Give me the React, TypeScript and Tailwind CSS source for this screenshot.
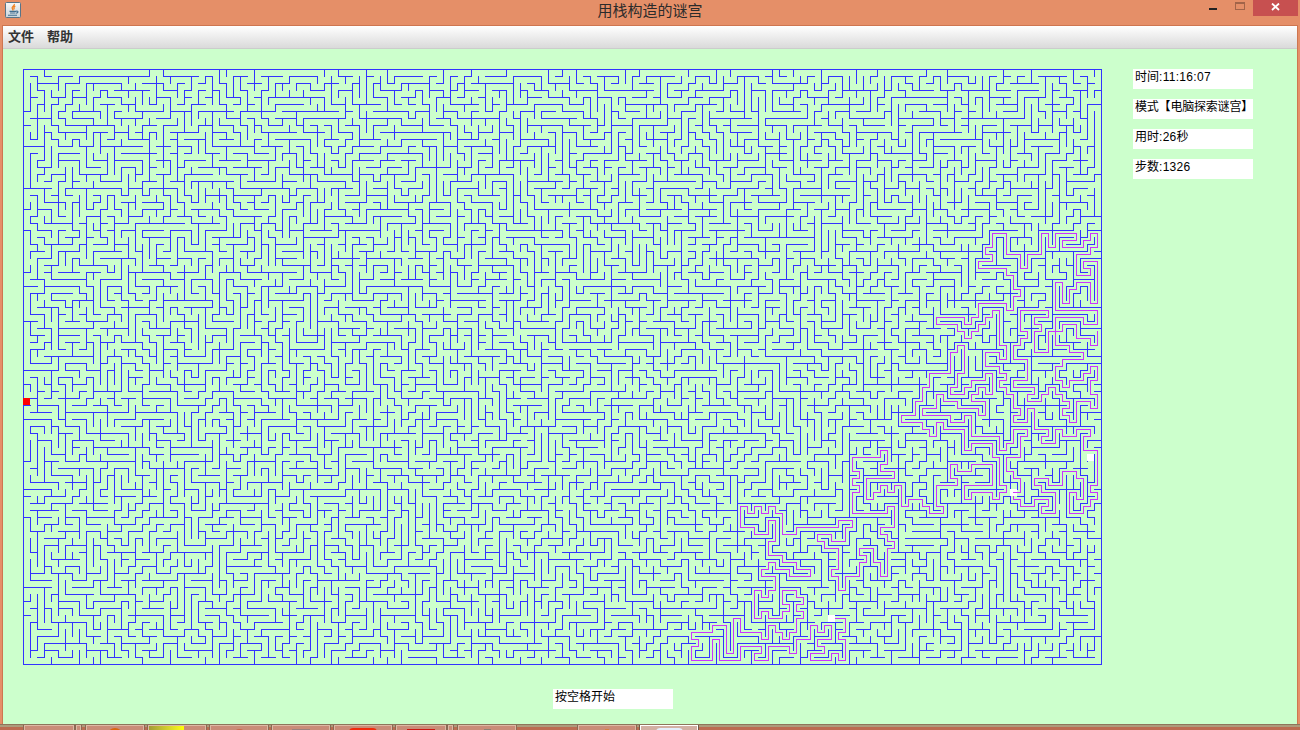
import React from "react";

const COLS = 154;
const ROWS = 85;
const CELL = 7;

// Corner cells (column,row) of the explored route, in walking order.
const ROUTE = `
115,78 117,78 117,80 116,80 116,81 117,81 117,84 116,84 116,83 115,83 115,84 112,84 112,83 114,83 114,82 113,82 113,81 115,81
115,79 114,79 114,80 113,80 113,79 112,79 112,81 110,81 110,83 109,83 109,82 106,82 106,84 104,84 104,83 105,83 105,82
102,82 102,84 99,84 99,81 98,81 98,84 95,84 95,82 96,82 96,81 95,81 95,80 98,80 98,79 100,79 100,83 101,83 101,78
102,78 102,80 105,80 105,81 106,81 106,79 107,79 107,80 108,80 108,81 109,81 109,80 110,80 110,78 111,78 111,77 110,77
110,76 111,76 111,75 110,75 110,74 108,74 108,76 109,76 109,77 108,77 108,78 106,78 106,77 105,77 105,78 104,78 104,74
105,74 105,75 106,75 106,74 107,74 107,72 105,72 105,71 106,71 106,70 107,70 107,71 109,71 109,72 112,72 112,71 110,71
110,70 108,70 108,69 106,69 106,67 107,67 107,64 106,64 106,66 104,66 104,65 102,65 102,62 103,62 103,63 104,63 104,62
105,62 105,63 106,63 106,62 107,62 107,63 108,63 108,66 110,66 110,65 116,65 116,64 118,64 118,65 117,65 117,67 115,67
115,66 113,66 113,67 114,67 114,68 116,68 116,71 115,71 115,72 116,72 116,74 117,74 117,72 119,72 119,70 120,70 120,69
119,69 119,68 121,68 121,70 122,70 122,72 123,72 123,68 124,68 124,67 123,67 123,66 122,66 122,65 124,65 124,62 123,62
123,63 118,63 118,60 119,60 119,59 118,59 118,58 119,58 119,57 118,57 118,55 122,55 122,54 123,54 123,56 122,56 122,57
124,57 124,58 120,58 120,61 121,61 121,60 122,60 122,59 123,59 123,60 124,60 124,59 125,59 125,62 126,62 126,61 128,61
128,62 129,62 129,63 131,63 131,62 130,62 130,59 133,59 133,58 132,58 132,56 133,56 133,57 135,57 135,56 138,56 138,59
134,59 134,61 135,61 135,60 138,60 138,61 139,61 139,60 140,60 140,59 139,59 139,55 138,55 138,53 135,53 135,54 134,54
134,51 131,51 131,50 130,50 130,52 129,52 129,51 128,51 128,50 125,50 125,49 127,49 127,47 128,47 128,45 129,45 129,43
132,43 132,40 133,40 133,39 134,39 134,43 133,43 133,45 132,45 132,46 134,46 134,45 135,45 135,44 137,44 137,43 138,43
138,46 137,46 137,45 136,45 136,46 135,46 135,47 137,47 137,49 136,49 136,48 133,48 133,47 131,47 131,46 130,46 130,48
128,48 128,49 132,49 132,50 134,50 134,49 135,49 135,52 139,52 139,54 140,54 140,53 141,53 141,51 143,51 143,52 142,52
142,55 140,55 140,57 141,57 141,58 142,58 142,60 141,60 141,61 142,61 142,62 144,62 144,61 146,61 146,62 145,62 145,63
147,63 147,60 145,60 145,59 144,59 144,58 146,58 146,59 148,59 148,57 150,57 150,58 151,58 151,61 150,61 150,60 149,60
149,63 151,63 151,62 152,62 152,61 153,61 153,60 152,60 152,59 153,59 153,54 151,54 151,52 152,52 152,51 150,51 150,52
148,52 148,51 147,51 147,53 145,53 145,52 146,52 146,51 144,51 144,48 143,48 143,50 141,50 141,49 142,49 142,48 141,48
141,46 140,46 140,45 139,45 139,44 140,44 140,43 139,43 139,42 137,42 137,40 139,40 139,41 140,41 140,39 139,39 139,34
138,34 138,35 137,35 137,36 136,36 136,37 135,37 135,38 134,38 134,37 133,37 133,36 130,36 130,35 134,35 134,36 135,36
135,35 136,35 136,33 140,33 140,34 141,34 141,32 142,32 142,31 141,31 141,29 140,29 140,28 136,28 136,27 138,27 138,26
137,26 137,25 138,25 138,23 140,23 140,26 142,26 142,28 143,28 143,26 145,26 145,23 146,23 146,25 147,25 147,23 150,23
150,24 148,24 148,25 151,25 151,24 152,24 152,23 153,23 153,25 152,25 152,26 150,26 150,29 152,29 152,28 151,28 151,27
153,27 153,33 152,33 152,30 150,30 150,31 149,31 149,33 148,33 148,30 147,30 147,34 153,34 153,36 151,36 151,35 147,35
147,37 146,37 146,40 144,40 144,37 145,37 145,36 144,36 144,35 146,35 146,34 142,34 142,37 143,37 143,38 142,38 142,39
141,39 141,41 143,41 143,44 141,44 141,45 144,45 144,46 143,46 143,47 145,47 145,46 146,46 146,45 147,45 147,46 148,46
148,47 149,47 149,48 148,48 148,49 149,49 149,50 150,50 150,47 152,47 152,48 153,48 153,46 152,46 152,44 153,44 153,42
152,42 152,43 151,43 151,44 149,44 149,45 148,45 148,44 147,44 147,42 148,42 148,41 151,41 151,40 149,40 149,39 147,39
147,37 148,37 148,36 150,36 150,38 152,38 152,39 153,39 153,37`;

const corners: number[][] = ROUTE.trim()
  .split(/\s+/)
  .map((pair) => pair.split(",").map(Number));

function buildWalls(): string {
  const seen = new Uint8Array(COLS * ROWS);
  const open = new Set<number>();
  const active: number[] = [];
  const link = (a: number, b: number) => {
    open.add(Math.min(a, b) * 2 + (Math.abs(a - b) === 1 ? 0 : 1));
  };
  const visit = (i: number) => {
    seen[i] = 1;
    active.push(i);
  };

  visit(corners[0][1] * COLS + corners[0][0]);
  for (let i = 1; i < corners.length; i++) {
    let [c, r] = corners[i - 1];
    const [tc, tr] = corners[i];
    while (c !== tc || r !== tr) {
      const nc = c + Math.sign(tc - c);
      const nr = nc === c ? r + Math.sign(tr - r) : r;
      const next = nr * COLS + nc;
      link(r * COLS + c, next);
      if (!seen[next]) visit(next);
      c = nc;
      r = nr;
    }
  }

  let seed = 20111607;
  const random = () => {
    seed = (seed + 0x6d2b79f5) | 0;
    let t = Math.imul(seed ^ (seed >>> 15), 1 | seed);
    t = (t + Math.imul(t ^ (t >>> 7), 61 | t)) ^ t;
    return ((t ^ (t >>> 14)) >>> 0) / 4294967296;
  };

  // Follow the newest cell most of the time and branch off elsewhere now and then.
  while (active.length) {
    const at = random() < 0.82 ? active.length - 1 : Math.floor(random() * active.length);
    const cell = active[at];
    const c = cell % COLS;
    const free: number[] = [];
    if (c > 0 && !seen[cell - 1]) free.push(cell - 1);
    if (c < COLS - 1 && !seen[cell + 1]) free.push(cell + 1);
    if (cell >= COLS && !seen[cell - COLS]) free.push(cell - COLS);
    if (cell < COLS * (ROWS - 1) && !seen[cell + COLS]) free.push(cell + COLS);
    if (!free.length) {
      active.splice(at, 1);
      continue;
    }
    const next = free[Math.floor(random() * free.length)];
    link(cell, next);
    visit(next);
  }

  let d = "";
  for (let r = 0; r < ROWS; r++)
    for (let c = 0; c < COLS; c++) {
      const i = r * COLS + c;
      const x = c * CELL;
      const y = r * CELL;
      if (c < COLS - 1 && !open.has(i * 2)) d += `M${x + CELL} ${y}h1v8h-1z`;
      if (r < ROWS - 1 && !open.has(i * 2 + 1)) d += `M${x} ${y + CELL}h8v1h-8z`;
    }
  return d;
}

const walls = buildWalls();
const trail = corners.map(([c, r]) => `${c * CELL + 3.5},${r * CELL + 3.5}`).join(" ");

function Maze() {
  return (
    <svg width="1079" height="596" viewBox="0 0 1079 596" shapeRendering="crispEdges" className="block shrink-0">
      <path d={walls} fill="#3333ff" />
      <rect x="0.5" y="0.5" width="1078" height="595" fill="none" stroke="#3333ff" />
      <rect x="987" y="420" width="7" height="7" fill="#fff" />
      <polyline points={trail} fill="none" stroke="#cc33ff" strokeWidth="1" strokeLinecap="square" />
      <rect x="987" y="424" width="7" height="3" fill="#fff" />
      <rect x="1064" y="385" width="7" height="7" fill="#fff" />
      <rect x="805" y="546" width="7" height="7" fill="#fff" />
      <rect x="0" y="329" width="7" height="7" fill="#ff0000" />
    </svg>
  );
}

function Field({ children }: { children: React.ReactNode }) {
  return (
    <div className="h-5 w-[120px] whitespace-nowrap bg-white pl-[2px] text-[12px] leading-[17px] text-black">
      {children}
    </div>
  );
}

function Digits({ children }: { children: React.ReactNode }) {
  return <span className="tracking-[0.3px]">{children}</span>;
}

function JavaIcon() {
  return (
    <svg width="16" height="16" viewBox="0 0 16 16" className="block">
      <defs>
        <linearGradient id="tile" x1="0" y1="0" x2="0" y2="1">
          <stop offset="0" stopColor="#f8f8f8" />
          <stop offset="1" stopColor="#c8d4dc" />
        </linearGradient>
      </defs>
      <rect x="0.5" y="0.5" width="15" height="15" rx="1" fill="url(#tile)" stroke="#587488" />
      <path d="M9.300 2C10 4.200 6.300 4.500 7.200 6.300L8.200 8.500M10.300 4.200C8.500 5 8.600 6 9.400 7.300" fill="none" stroke="#f08020" strokeWidth="1.300" />
      <path d="M4.500 9.400h6.500M5 11h5.500M3 13.200h9M11 9.200c2.800-.6 2.500 1.800 0 2" fill="none" stroke="#426f91" strokeWidth="1.100" />
    </svg>
  );
}

function Task({ className, children }: { className: string; children?: React.ReactNode }) {
  return (
    <div className={"flex h-[6px] shrink-0 justify-center overflow-hidden border border-b-0 " + className}>
      {children}
    </div>
  );
}

const plain = "border-[#dcb9a4] bg-[#c98c78] outline outline-1 outline-[#8b6854]";

function Taskbar() {
  return (
    <div className="flex h-[6px] w-full overflow-hidden border-t border-[#8d755b] bg-[linear-gradient(#ad9b7b_0_2px,#bb6c51_2px)] pl-6">
      <Task className={"w-[50px] " + plain} />
      <Task className={"ml-[2px] w-[5px] " + plain} />
      <Task className={"ml-[5px] w-[58px] " + plain}>
        <div className="mt-[2px] h-2 w-[16px] rounded-t-full bg-[#d96510]" />
      </Task>
      <Task className={"ml-1 w-[58px] " + plain}>
        <div className="mr-auto h-2 w-[35px] shrink-0 bg-gradient-to-r from-[#a39b37] to-[#ffff00]" />
      </Task>
      <Task className={"ml-1 w-[58px] " + plain}>
        <div className="mt-[3px] h-2 w-[9px] rounded-t bg-[#ca684e]" />
      </Task>
      <Task className={"ml-1 w-[58px] " + plain}>
        <div className="mt-[3px] h-2 w-[18px] bg-[#9b8280]" />
      </Task>
      <Task className={"ml-1 w-[58px] " + plain}>
        <div className="mt-[2px] h-2 w-[28px] rounded-t bg-[#f02b0c]" />
      </Task>
      <Task className={"ml-1 w-[50px] " + plain}>
        <div className="mt-[3px] h-2 w-[28px] bg-[#cb1711]" />
      </Task>
      <Task className={"ml-[2px] w-[5px] " + plain} />
      <Task className={"ml-[5px] w-[58px] " + plain}>
        <div className="mt-[3px] h-2 w-[7px] bg-[#8c8277]" />
      </Task>
      <Task className={"ml-[62px] w-[58px] " + plain}>
        <div className="mt-[3px] h-2 w-[4px] bg-[#d98040]" />
      </Task>
      <Task className="ml-1 w-[58px] border-[#ffffff] bg-[#d2b0a3] outline outline-1 outline-[#6f5948]">
        <div className="mt-[2px] h-2 w-[27px] rounded-t bg-[#e4eefb]" />
      </Task>
    </div>
  );
}

export default function App() {
  return (
    <div className="flex h-[730px] w-[1300px] flex-col overflow-hidden bg-[#e58f68] font-['Liberation_Sans','Noto_Sans_CJK_SC',sans-serif]">
      <header className="grid h-[25px] shrink-0 grid-cols-[1fr_auto_1fr] items-start">
        <div className="pl-[5px] pt-[2px]">
          <JavaIcon />
        </div>
        <h1 className="text-[15px] leading-[21px] text-[#2b2b2b]">用栈构造的谜宫</h1>
        <div className="flex justify-end pr-[2px]">
          <svg width="44" height="16" className="block" shapeRendering="crispEdges">
            <rect x="0" y="8" width="8" height="2" fill="#222" />
            <rect x="26.500" y="2.500" width="9" height="7" fill="none" stroke="#a26449" />
            <rect x="26" y="2" width="10" height="2" fill="#a26449" />
          </svg>
          <div className="flex h-4 w-[45px] justify-center bg-[#c75050]">
            <svg width="9" height="8" viewBox="0 0 9 8" className="mt-[3px] block">
              <path d="M1 .5L8 7M8 .5L1 7" stroke="#fff" strokeWidth="1.800" />
            </svg>
          </div>
        </div>
      </header>
      <div className="ml-[2px] mr-[2px] flex min-h-0 flex-1 flex-col border-x border-t border-[#ce7650]">
        <nav className="flex h-[23px] shrink-0 gap-[13px] border-b border-[#cccccc] bg-gradient-to-b from-white to-[#dadada] pl-[5px] text-[13px] font-bold leading-[21px] text-[#333]">
          <span>文件</span>
          <span>帮助</span>
        </nav>
        <main className="flex min-h-0 flex-1 flex-col bg-[#ccffcc]">
          <div className="flex pl-5 pt-5">
            <Maze />
            <aside className="ml-[31px] flex flex-col gap-[10px]">
              <Field>时间<Digits>:11:16:07</Digits></Field>
              <Field><span className="tracking-[-0.2px]">模式【电脑探索谜宫】</span></Field>
              <Field>用时<Digits>:26</Digits>秒</Field>
              <Field>步数<Digits>:1326</Digits></Field>
            </aside>
          </div>
          <div className="ml-[550px] mt-6">
            <Field>按空格开始</Field>
          </div>
        </main>
      </div>
      <Taskbar />
    </div>
  );
}
